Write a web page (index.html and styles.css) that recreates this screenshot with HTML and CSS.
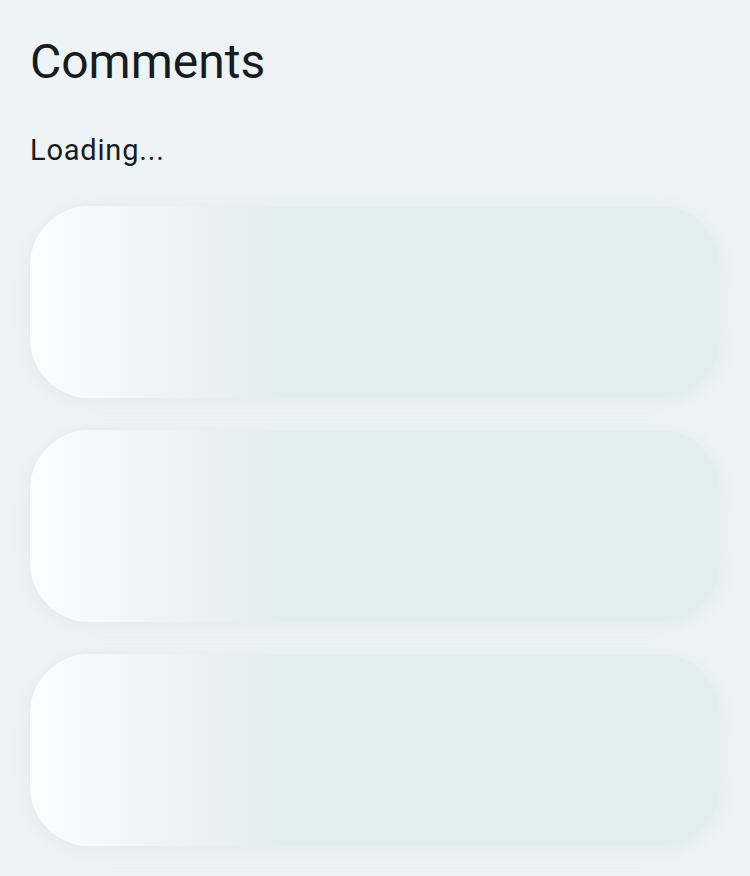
FILE: index.html
```html
<!DOCTYPE html>
<html>
<head>
<meta charset="utf-8">
<link rel="stylesheet" href="styles.css">
</head>
<body>
<main class="page">
  <h1 class="title">Comments</h1>
  <p class="status">Loading...</p>
  <div class="list">
    <div class="skeleton"></div>
    <div class="skeleton"></div>
    <div class="skeleton"></div>
  </div>
</main>
</body>
</html>
```
FILE: styles.css
```css
html, body {
  margin: 0;
  padding: 0;
  background: #eef3f6;
}
.page {
  padding: 30px 30px 30px 30px;
  font-family: Roboto, "Noto Sans", sans-serif;
  color: #161c21;
}
.title {
  margin: 0;
  font-size: 48px;
  font-weight: 400;
  line-height: 64px;
}
.status {
  margin: 36px 0 0 0;
  font-size: 29px;
  line-height: 40px;
  letter-spacing: 0.8px;
  font-weight: 400;
}
.list {
  margin-top: 36px;
  display: flex;
  flex-direction: column;
  gap: 32px;
}
.skeleton {
  height: 192px;
  border-radius: 60px;
  background: linear-gradient(90deg, #fcfdfe 0%, #edf3f6 20%, #e2edf2 36%, #e2edf2 100%);
  box-shadow: 0 4px 24px rgba(150, 180, 195, 0.14);
}
```
